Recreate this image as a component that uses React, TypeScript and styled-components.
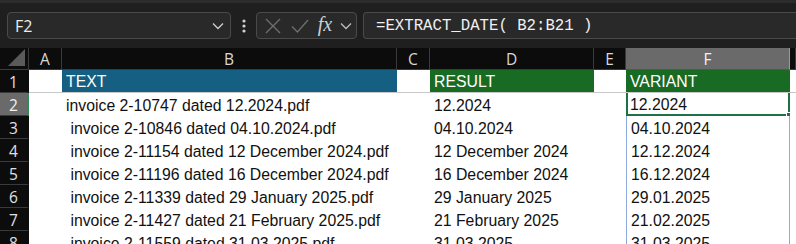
import React from 'react';
import styled, { createGlobalStyle } from 'styled-components';

const GlobalStyle = createGlobalStyle`
  html, body {
    margin: 0;
    padding: 0;
    background: #ffffff;
  }
  * { box-sizing: border-box; }
`;

const Page = styled.div`
  width: 796px;
  height: 244px;
  overflow: hidden;
  background: #ffffff;
`;

const Toolbar = styled.div`
  height: 48px;
  background: #1f1f1f;
  border-top: 3px solid #2c2c2c;
  padding-top: 9px;
  display: flex;
  align-items: flex-start;
`;

const Box = styled.div`
  height: 27px;
  border: 1px solid #4a4a4a;
  border-radius: 4px;
  background: #292929;
  display: flex;
  align-items: center;
  color: #ececec;
`;

const NameBox = styled(Box)`
  margin-left: 7px;
  width: 224px;
  padding: 0 6px 0 7px;
  justify-content: space-between;
  font-family: "Open Sans", "Noto Sans", sans-serif;
  font-size: 16px;
`;

const Dots = styled.div`
  width: 25px;
  height: 27px;
  display: flex;
  align-items: center;
  justify-content: center;
`;

const FxBox = styled(Box)`
  width: 101px;
  padding: 0 4px 0 7px;
  justify-content: space-between;
`;

const FxGlyph = styled.span`
  font-family: "Liberation Serif", "DejaVu Serif", serif;
  font-style: italic;
  font-size: 20px;
  color: #cfcfcf;
  line-height: 1;
  margin-top: -3px;
`;

const FormulaBox = styled(Box)`
  margin-left: 6px;
  flex: 1;
  border-right: none;
  border-radius: 4px 0 0 4px;
  padding-left: 12px;
  font-family: "Liberation Mono", "DejaVu Sans Mono", monospace;
  font-size: 15.7px;
  color: #f0f0f0;
`;

const Grid = styled.div`
  display: grid;
  grid-template-columns: 29px 33px 335px 33px 164px 32px 164px 1fr;
  grid-template-rows: 22px;
  grid-auto-rows: 23px;
`;

const ColHead = styled.div<{ $selected?: boolean }>`
  background: ${({ $selected }) => ($selected ? '#6a6a6a' : '#0c0c0c')};
  color: ${({ $selected }) => ($selected ? '#f2f2f2' : '#d8d8d8')};
  border-right: 1px solid ${({ $selected }) => ($selected ? '#9a9a9a' : '#3a3a3a')};
  border-bottom: 1px solid ${({ $selected }) => ($selected ? '#217346' : '#3a3a3a')};
  display: flex;
  align-items: center;
  justify-content: center;
  padding-top: 2px;
  font-family: "Open Sans", "Noto Sans", sans-serif;
  font-size: 15.5px;
  line-height: 1;
`;

const Corner = styled(ColHead)`
  justify-content: flex-end;
  align-items: flex-end;
  padding: 0 3px 3px 0;
`;

const RowHead = styled.div<{ $selected?: boolean }>`
  background: ${({ $selected }) => ($selected ? '#6a6a6a' : '#0c0c0c')};
  color: ${({ $selected }) => ($selected ? '#f2f2f2' : '#e0e0e0')};
  border-bottom: 1px solid #3a3a3a;
  border-right: 2px solid ${({ $selected }) => ($selected ? '#2e8b57' : '#0c0c0c')};
  display: flex;
  align-items: center;
  justify-content: center;
  font-family: "Open Sans", "Noto Sans", sans-serif;
  font-size: 15.5px;
  padding-top: 2px;
`;

type Fill = 'blue' | 'green' | undefined;
type Mark = 'active' | 'spill' | undefined;

const Cell = styled.div<{ $fill?: Fill; $mark?: Mark; $head?: boolean }>`
  position: relative;
  background: ${({ $fill }) =>
    $fill === 'blue' ? '#156082' : $fill === 'green' ? '#196b24' : '#ffffff'};
  color: ${({ $fill }) => ($fill ? '#ffffff' : '#111111')};
  border-bottom: ${({ $head }) => ($head ? '1px solid #c8c8c8' : 'none')};
  border-left: ${({ $mark }) =>
    $mark === 'active' ? '2px solid #1e7145' : $mark === 'spill' ? '1px solid #8eaadb' : 'none'};
  border-right: ${({ $mark }) =>
    $mark === 'active' ? '2px solid #1e7145' : $mark === 'spill' ? '1px solid #8eaadb' : 'none'};
  ${({ $mark }) => ($mark === 'active' ? 'border-bottom: 2px solid #1e7145;' : '')}
  padding-left: ${({ $mark }) => ($mark === 'active' ? '2px' : '4px')};
  padding-top: ${({ $head }) => ($head ? '1px' : '3px')};
  display: flex;
  align-items: center;
  white-space: pre;
  font-family: "Liberation Sans", Arial, sans-serif;
  font-size: 15.8px;
  line-height: 1;
`;

const FillHandle = styled.div`
  position: absolute;
  right: -4px;
  bottom: -4px;
  width: 6px;
  height: 6px;
  background: #1e7145;
  border: 1px solid #ffffff;
`;

const Chevron = ({ color = '#cfcfcf' }: { color?: string }) => (
  <svg width="12" height="8" viewBox="0 0 12 8">
    <path d="M1 1.5 L6 6.5 L11 1.5" fill="none" stroke={color} strokeWidth="1.3" />
  </svg>
);

const rows: [string, string, string][] = [
  ['invoice 2-10747 dated 12.2024.pdf', '12.2024', '12.2024'],
  [' invoice 2-10846 dated 04.10.2024.pdf', '04.10.2024', '04.10.2024'],
  [' invoice 2-11154 dated 12 December 2024.pdf', '12 December 2024', '12.12.2024'],
  [' invoice 2-11196 dated 16 December 2024.pdf', '16 December 2024', '16.12.2024'],
  [' invoice 2-11339 dated 29 January 2025.pdf', '29 January 2025', '29.01.2025'],
  [' invoice 2-11427 dated 21 February 2025.pdf', '21 February 2025', '21.02.2025'],
  [' invoice 2-11559 dated 31.03.2025.pdf', '31.03.2025', '31.03.2025'],
];

export default function App() {
  return (
    <Page>
      <GlobalStyle />
      <Toolbar>
        <NameBox>
          <span>F2</span>
          <Chevron />
        </NameBox>
        <Dots>
          <svg width="4" height="14" viewBox="0 0 4 14">
            <circle cx="2" cy="2" r="1.6" fill="#d0d0d0" />
            <circle cx="2" cy="7" r="1.6" fill="#d0d0d0" />
            <circle cx="2" cy="12" r="1.6" fill="#d0d0d0" />
          </svg>
        </Dots>
        <FxBox>
          <svg width="18" height="18" viewBox="0 0 18 18">
            <path d="M2 2 L16 16 M16 2 L2 16" stroke="#6f6f6f" strokeWidth="1.3" />
          </svg>
          <svg width="20" height="18" viewBox="0 0 20 18">
            <path d="M2 9.5 L7.5 15 L18 3" fill="none" stroke="#6f6f6f" strokeWidth="1.3" />
          </svg>
          <FxGlyph>fx</FxGlyph>
          <Chevron color="#bdbdbd" />
        </FxBox>
        <FormulaBox>=EXTRACT_DATE( B2:B21 )</FormulaBox>
      </Toolbar>
      <Grid>
        <Corner>
          <svg width="17" height="17" viewBox="0 0 17 17">
            <path d="M17 0 L17 17 L0 17 Z" fill="#5a5a5a" />
          </svg>
        </Corner>
        <ColHead>A</ColHead>
        <ColHead>B</ColHead>
        <ColHead>C</ColHead>
        <ColHead>D</ColHead>
        <ColHead>E</ColHead>
        <ColHead $selected>F</ColHead>
        <ColHead />

        <RowHead>1</RowHead>
        <Cell $head />
        <Cell $head $fill="blue">TEXT</Cell>
        <Cell $head />
        <Cell $head $fill="green">RESULT</Cell>
        <Cell $head />
        <Cell $head $fill="green">VARIANT</Cell>
        <Cell $head />

        {rows.map(([text, result, variant], i) => (
          <React.Fragment key={i}>
            <RowHead $selected={i === 0}>{i + 2}</RowHead>
            <Cell />
            <Cell>{text}</Cell>
            <Cell />
            <Cell>{result}</Cell>
            <Cell />
            <Cell $mark={i === 0 ? 'active' : 'spill'}>
              {variant}
              {i === 0 && <FillHandle />}
            </Cell>
            <Cell />
          </React.Fragment>
        ))}
      </Grid>
    </Page>
  );
}
